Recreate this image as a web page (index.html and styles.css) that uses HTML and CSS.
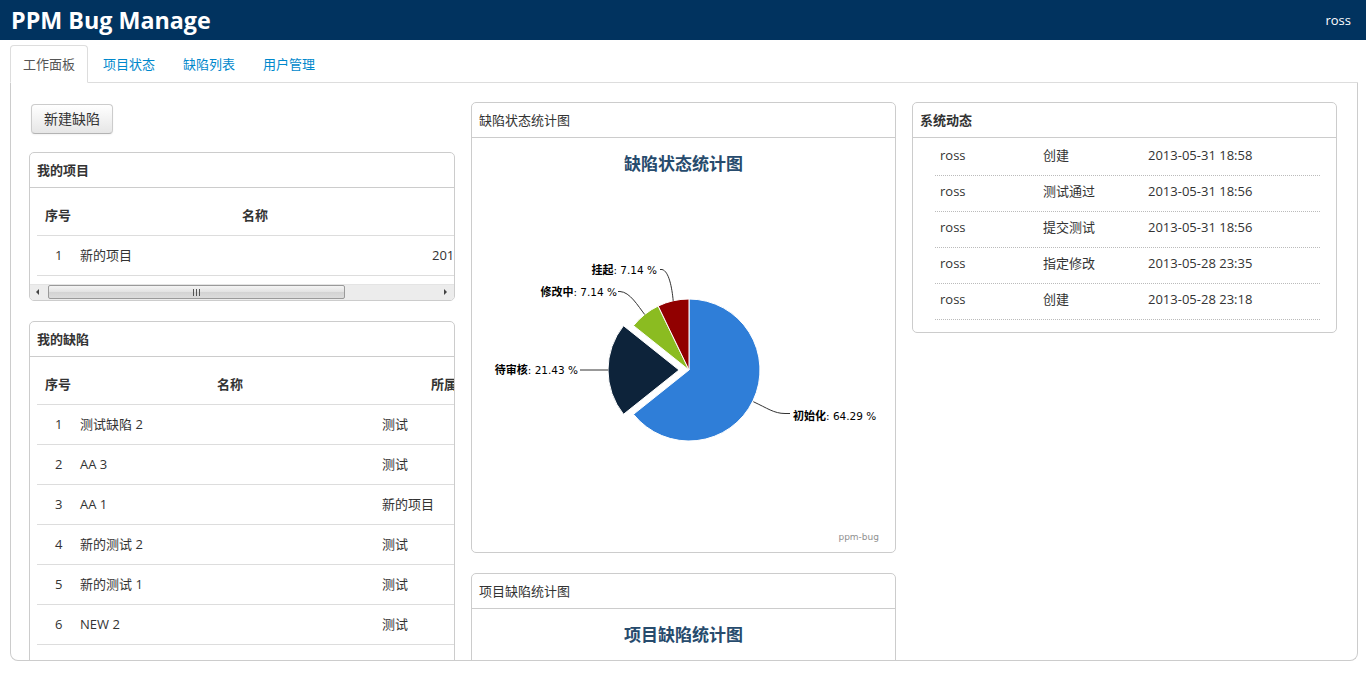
FILE: index.html
```html
<!DOCTYPE html>
<html lang="zh-CN">
<head>
<meta charset="utf-8">
<title>PPM Bug Manage</title>
<link rel="stylesheet" href="styles.css">
</head>
<body>
<header class="topbar">
  <span class="brand">PPM Bug Manage</span>
  <span class="user">ross</span>
</header>
<div class="wrap">
  <ul class="tabs">
    <li class="active"><a href="#">工作面板</a></li>
    <li><a href="#">项目状态</a></li>
    <li><a href="#">缺陷列表</a></li>
    <li><a href="#">用户管理</a></li>
  </ul>
  <div class="main">
    <div class="col">
      <button class="btn">新建缺陷</button>
      <div class="panel">
        <div class="panel-h">我的项目</div>
        <div class="tbl-wrap">
          <table class="tbl tbl-proj">
            <colgroup><col class="w-num"><col class="w-pname"><col class="w-date"><col class="w-more"></colgroup>
            <tr><th class="th-num">序号</th><th class="th-pname">名称</th><th class="th-c">创建时间</th><th class="th-c">操作</th></tr>
            <tr><td class="td-num">1</td><td class="td-txt">新的项目</td><td class="td-txt">2013-05-28 23:10</td><td class="td-txt">编辑</td></tr>
          </table>
        </div>
        <div class="hscroll">
          <span class="arrow arrow-l"></span>
          <span class="thumb"><span class="grip"></span></span>
          <span class="track-rest"></span>
          <span class="arrow arrow-r"></span>
        </div>
      </div>
      <div class="panel">
        <div class="panel-h">我的缺陷</div>
        <div class="tbl-wrap tbl-wrap-tall">
          <table class="tbl tbl-bug">
            <colgroup><col class="w-num"><col class="w-bname"><col class="w-proj"><col class="w-more"></colgroup>
            <tr><th class="th-num">序号</th><th class="th-bname">名称</th><th class="th-proj">所属项目</th><th class="th-c">状态</th></tr>
            <tr><td class="td-num">1</td><td class="td-txt">测试缺陷 2</td><td class="td-txt">测试</td><td class="td-txt">初始化</td></tr>
            <tr><td class="td-num">2</td><td class="td-txt">AA 3</td><td class="td-txt">测试</td><td class="td-txt">初始化</td></tr>
            <tr><td class="td-num">3</td><td class="td-txt">AA 1</td><td class="td-txt">新的项目</td><td class="td-txt">初始化</td></tr>
            <tr><td class="td-num">4</td><td class="td-txt">新的测试 2</td><td class="td-txt">测试</td><td class="td-txt">初始化</td></tr>
            <tr><td class="td-num">5</td><td class="td-txt">新的测试 1</td><td class="td-txt">测试</td><td class="td-txt">初始化</td></tr>
            <tr><td class="td-num">6</td><td class="td-txt">NEW 2</td><td class="td-txt">测试</td><td class="td-txt">初始化</td></tr>
          </table>
        </div>
      </div>
    </div>

    <div class="col">
      <div class="panel">
        <div class="panel-h panel-h-light">缺陷状态统计图</div>
        <svg class="chart" viewBox="0 0 423 414" width="423" height="414">
          <text class="chart-title" x="211.5" y="32" text-anchor="middle">缺陷状态统计图</text>
          <g stroke="#fff" stroke-width="1" stroke-linejoin="round">
            <path d="M217 232 L217 161 A71 71 0 1 1 161.5 276.3 Z" fill="#2f7ed8"/>
            <path d="M207 232 L151.5 276.3 A71 71 0 0 1 151.5 187.7 Z" fill="#0d233a"/>
            <path d="M217 232 L161.5 187.7 A71 71 0 0 1 186.2 168 Z" fill="#8bbc21"/>
            <path d="M217 232 L186.2 168 A71 71 0 0 1 217 161 Z" fill="#910000"/>
          </g>
          <g fill="none" stroke="#333" stroke-width="1">
            <path d="M281.3 263.7 C 295 270, 302 275.5, 313 275.5 L 318 275.5"/>
            <path d="M136 232 L108 232"/>
            <path d="M172.7 176.5 C 166 168, 158 154, 148 153.5 L 146 153.5"/>
            <path d="M201.2 162.8 C 200 150, 197 133, 190 131.5 L 188 131.5"/>
          </g>
          <g class="dl">
            <text x="321" y="282"><tspan class="dl-b">初始化</tspan>: 64.29 %</text>
            <text x="106" y="236" text-anchor="end"><tspan class="dl-b">待审核</tspan>: 21.43 %</text>
            <text x="145" y="158" text-anchor="end"><tspan class="dl-b">修改中</tspan>: 7.14 %</text>
            <text x="185" y="136" text-anchor="end"><tspan class="dl-b">挂起</tspan>: 7.14 %</text>
          </g>
          <text class="credit" x="407" y="402" text-anchor="end">ppm-bug</text>
        </svg>
      </div>
      <div class="panel">
        <div class="panel-h panel-h-light">项目缺陷统计图</div>
        <svg class="chart" viewBox="0 0 423 60" width="423" height="60">
          <text class="chart-title" x="211.5" y="32" text-anchor="middle">项目缺陷统计图</text>
        </svg>
      </div>
    </div>

    <div class="col">
      <div class="panel">
        <div class="panel-h">系统动态</div>
        <div class="feed">
          <div class="feed-row"><span class="who">ross</span><span class="act">创建</span><span class="when">2013-05-31 18:58</span></div>
          <div class="feed-row"><span class="who">ross</span><span class="act">测试通过</span><span class="when">2013-05-31 18:56</span></div>
          <div class="feed-row"><span class="who">ross</span><span class="act">提交测试</span><span class="when">2013-05-31 18:56</span></div>
          <div class="feed-row"><span class="who">ross</span><span class="act">指定修改</span><span class="when">2013-05-28 23:35</span></div>
          <div class="feed-row"><span class="who">ross</span><span class="act">创建</span><span class="when">2013-05-28 23:18</span></div>
        </div>
      </div>
    </div>
  </div>
</div>
</body>
</html>
```

FILE: styles.css
```css
* { box-sizing: border-box; }

body {
  margin: 0;
  font-family: "Open Sans", "Noto Sans CJK SC", sans-serif;
  font-size: 13px;
  color: #333;
  background: #fff;
}

.topbar {
  height: 40px;
  background: #01335f;
  color: #fff;
  display: flex;
  align-items: center;
  justify-content: space-between;
  padding: 0 15px 0 11px;
}

.brand {
  font-size: 23.3px;
  font-weight: 700;
  line-height: 40px;
}

.user {
  font-size: 13px;
}

.wrap {
  padding: 0 8px 0 10px;
}

.tabs {
  list-style: none;
  margin: 5px 0 0;
  padding: 0;
  display: flex;
  border-bottom: 1px solid #ddd;
}

.tabs li {
  margin-right: 2px;
  margin-bottom: -1px;
}

.tabs a {
  display: block;
  padding: 8px 12px;
  line-height: 20px;
  border: 1px solid transparent;
  border-radius: 4px 4px 0 0;
  color: #0088cc;
  text-decoration: none;
  font-size: 13px;
}

.tabs .active a {
  color: #555;
  background: #fff;
  border-color: #ddd #ddd transparent;
}

.main {
  height: 578px;
  border: 1px solid #ccc;
  border-top: 0;
  border-radius: 0 0 8px 8px;
  overflow: hidden;
  display: grid;
  grid-template-columns: 426px 425px 425px;
  column-gap: 16px;
  padding: 19px 19px 0 18px;
  align-items: start;
}

.col {
  display: flex;
  flex-direction: column;
  align-items: stretch;
}

.btn {
  align-self: flex-start;
  margin: 2px 0 18px 2px;
  padding: 4px 12px;
  font-family: "Open Sans", "Noto Sans CJK SC", sans-serif;
  font-size: 14px;
  line-height: 20px;
  color: #333;
  background: linear-gradient(#ffffff, #e6e6e6);
  border: 1px solid #ccc;
  border-bottom-color: #b3b3b3;
  border-radius: 4px;
  box-shadow: inset 0 1px 0 rgba(255,255,255,.2), 0 1px 2px rgba(0,0,0,.05);
}

.panel {
  border: 1px solid #ccc;
  border-radius: 5px;
  background: #fff;
  overflow: hidden;
  margin-bottom: 20px;
}

.panel-h {
  height: 35px;
  line-height: 34px;
  border-bottom: 1px solid #ccc;
  padding: 0 7px;
  font-weight: 700;
  font-size: 13px;
  color: #333;
}

.panel-h-light {
  font-weight: 400;
}

.tbl-wrap {
  overflow: hidden;
  padding: 8px 0 0 7px;
}

.tbl-wrap-tall {
  padding-bottom: 40px;
}

.tbl {
  border-collapse: separate;
  border-spacing: 0;
  table-layout: fixed;
}

.tbl-proj { width: 560px; }
.tbl-bug { width: 620px; }

.w-num { width: 35px; }
.w-pname { width: 352px; }
.w-bname { width: 302px; }
.w-date { width: 140px; }
.w-proj { width: 166px; }
.w-more { width: 117px; }

.tbl th,
.tbl td {
  padding: 0;
  height: 40px;
  line-height: 39px;
  border-bottom: 1px solid #ddd;
  text-align: left;
  white-space: nowrap;
  overflow: hidden;
  font-size: 13px;
}

.tbl th { font-weight: 700; color: #333; }

.th-num { padding-left: 8px !important; }
.th-pname { padding-left: 170px !important; }
.th-bname { padding-left: 145px !important; }
.th-proj { padding-left: 57px !important; }
.th-c { text-align: center !important; }

.td-num { padding-left: 18px !important; }
.td-txt { padding-left: 8px !important; }

.hscroll {
  margin-top: 8px;
  height: 16px;
  background: #ececec;
  border-top: 1px solid #e4e4e4;
  display: flex;
  align-items: stretch;
}

.arrow {
  width: 18px;
  position: relative;
  flex: none;
}

.arrow::after {
  content: "";
  position: absolute;
  top: 4px;
  width: 0;
  height: 0;
  border-top: 3px solid transparent;
  border-bottom: 3px solid transparent;
}

.arrow-l::after {
  left: 6px;
  border-right: 3px solid #444;
}

.arrow-r::after {
  right: 7px;
  border-left: 3px solid #444;
}

.thumb {
  width: 297px;
  flex: none;
  margin: 0 0 1px 0;
  border: 1px solid #9a9a9a;
  border-radius: 2px;
  background: linear-gradient(#f4f4f4, #e2e2e2 50%, #d3d3d3 51%, #dcdcdc);
  display: flex;
  align-items: center;
  justify-content: center;
}

.grip {
  width: 7px;
  height: 7px;
  background: repeating-linear-gradient(90deg, #555 0 1px, transparent 1px 3px);
}

.track-rest {
  flex: 1;
}

.chart {
  display: block;
}

.chart-title {
  font-family: "Noto Sans CJK SC", sans-serif;
  font-size: 17px;
  font-weight: 700;
  fill: #274b6d;
}

.dl text {
  font-family: "DejaVu Sans", "Noto Sans CJK SC", sans-serif;
  font-size: 10.5px;
  fill: #000;
}

.dl-b {
  font-family: "Noto Sans CJK SC", sans-serif;
  font-size: 11px;
  font-weight: 700;
}

.credit {
  font-family: "DejaVu Sans", sans-serif;
  font-size: 9px;
  fill: #909090;
}

.feed {
  margin: 0 16px 0 22px;
  padding: 2px 0 12px;
}

.feed-row {
  display: flex;
  height: 36px;
  line-height: 31px;
  border-bottom: 1px dotted #bbb;
  font-size: 13px;
  color: #333;
}

.who {
  width: 108px;
  padding-left: 5px;
  flex: none;
}

.act {
  width: 105px;
  flex: none;
}

.when {
  flex: 1;
}
```
